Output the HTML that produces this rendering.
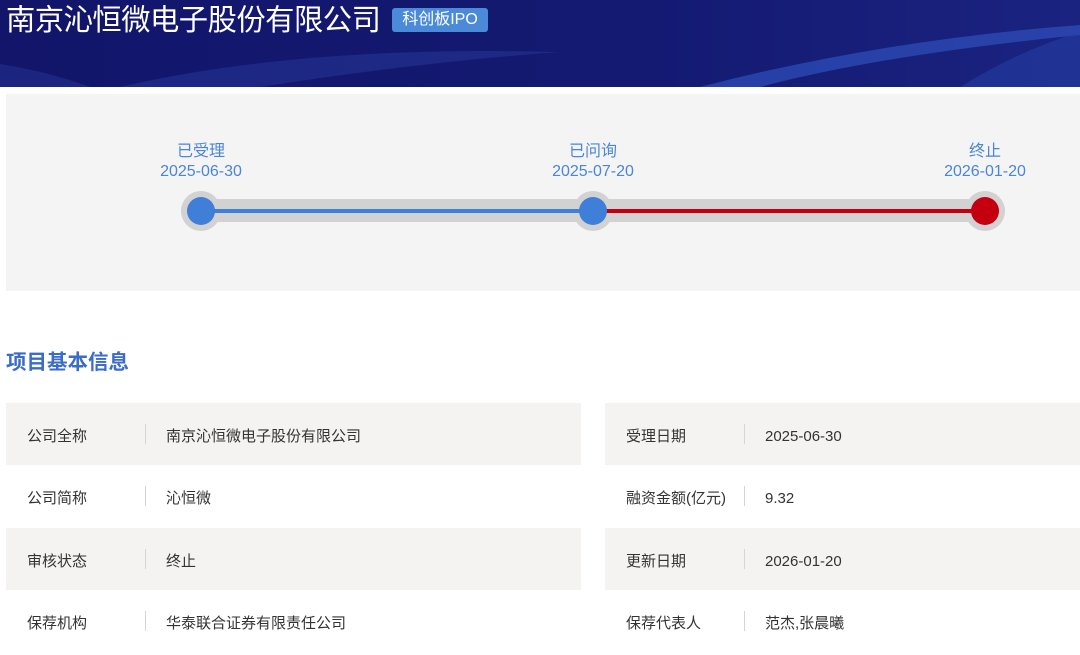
<!DOCTYPE html>
<html><head><meta charset="utf-8"><style>
*{margin:0;padding:0;box-sizing:border-box}
body{width:1080px;height:639px;overflow:hidden;background:#fff;font-family:"Liberation Sans","Noto Sans CJK SC",sans-serif;position:relative}
.hdr{position:absolute;left:0;top:0;width:1080px;height:87px;background:linear-gradient(90deg,#12156a,#141a72 60%,#1a2380);overflow:hidden}
.hdr h1{position:absolute;left:6px;top:2px;font-size:29.3px;font-weight:normal;color:#fff;line-height:38px;letter-spacing:-0.5px}
.tag{position:absolute;left:392px;top:8px;width:96px;height:24px;background:#4a8ad8;border-radius:3px;color:#fff;font-size:16px;line-height:24px;text-align:center}
.tl{position:absolute;left:6px;top:94px;width:1074px;height:197px;background:#f4f4f4}
.lbl{position:absolute;width:120px;text-align:center;color:#4a86d8;font-size:16px;line-height:20px}
.sec{position:absolute;left:6px;top:345px;font-size:20.5px;font-weight:bold;color:#3a6cc8}
.row{position:absolute;height:62px;font-size:15px;color:#333}
.g{background:#f4f3f2}
.row span{position:absolute;top:3px;line-height:62px}
.row i{position:absolute;top:21px;width:1px;height:20px;background:#d5d5d5}
</style></head><body>
<div class="hdr">
<svg width="1080" height="87" style="position:absolute;left:0;top:0">
<path d="M120 87 Q300 45 560 52 Q420 62 260 87Z" fill="#2a3fa0" opacity="0.45"/>
<path d="M700 87 Q880 40 1080 25 L1080 35 Q880 55 760 87Z" fill="#3358c8" opacity="0.6"/>
<path d="M0 64 Q50 72 90 87 L0 87Z" fill="#2a3fa0" opacity="0.4"/>
<path d="M960 87 Q1020 50 1080 32 L1080 87Z" fill="#2847b0" opacity="0.45"/>
</svg>
<h1>南京沁恒微电子股份有限公司</h1><div class="tag">科创板IPO</div></div>
<div class="tl"></div>
<svg width="1080" height="300" style="position:absolute;left:0;top:0">
<rect x="181" y="199" width="824" height="23" rx="11" fill="#d2d2d2"/>
<circle cx="201" cy="211" r="20" fill="#d2d2d2"/><circle cx="593" cy="211" r="20" fill="#d2d2d2"/><circle cx="985" cy="211" r="20" fill="#d2d2d2"/>
<rect x="201" y="209" width="392" height="4" fill="#3f7fd8"/>
<rect x="593" y="209" width="392" height="4" fill="#c40010"/>
<circle cx="201" cy="211" r="14" fill="#3f7fd8"/><circle cx="593" cy="211" r="14" fill="#3f7fd8"/><circle cx="985" cy="211" r="14" fill="#c40010"/>
</svg>
<div class="lbl" style="left:141px;top:142px">已受理<br>2025-06-30</div>
<div class="lbl" style="left:533px;top:142px">已问询<br>2025-07-20</div>
<div class="lbl" style="left:925px;top:142px">终止<br>2026-01-20</div>
<div class="sec">项目基本信息</div>
<div class="row g" style="left:6px;top:403px;width:575px"><span style="left:21px">公司全称</span><i style="left:139px"></i><span style="left:160px">南京沁恒微电子股份有限公司</span></div>
<div class="row" style="left:6px;top:465px;width:575px"><span style="left:21px">公司简称</span><i style="left:139px"></i><span style="left:160px">沁恒微</span></div>
<div class="row g" style="left:6px;top:528px;width:575px"><span style="left:21px">审核状态</span><i style="left:139px"></i><span style="left:160px">终止</span></div>
<div class="row" style="left:6px;top:590px;width:575px"><span style="left:21px">保荐机构</span><i style="left:139px"></i><span style="left:160px">华泰联合证券有限责任公司</span></div>
<div class="row g" style="left:605px;top:403px;width:475px"><span style="left:21px">受理日期</span><i style="left:139px"></i><span style="left:160px">2025-06-30</span></div>
<div class="row" style="left:605px;top:465px;width:475px"><span style="left:21px">融资金额(亿元)</span><i style="left:139px"></i><span style="left:160px">9.32</span></div>
<div class="row g" style="left:605px;top:528px;width:475px"><span style="left:21px">更新日期</span><i style="left:139px"></i><span style="left:160px">2026-01-20</span></div>
<div class="row" style="left:605px;top:590px;width:475px"><span style="left:21px">保荐代表人</span><i style="left:139px"></i><span style="left:160px">范杰,张晨曦</span></div>
</body></html>
